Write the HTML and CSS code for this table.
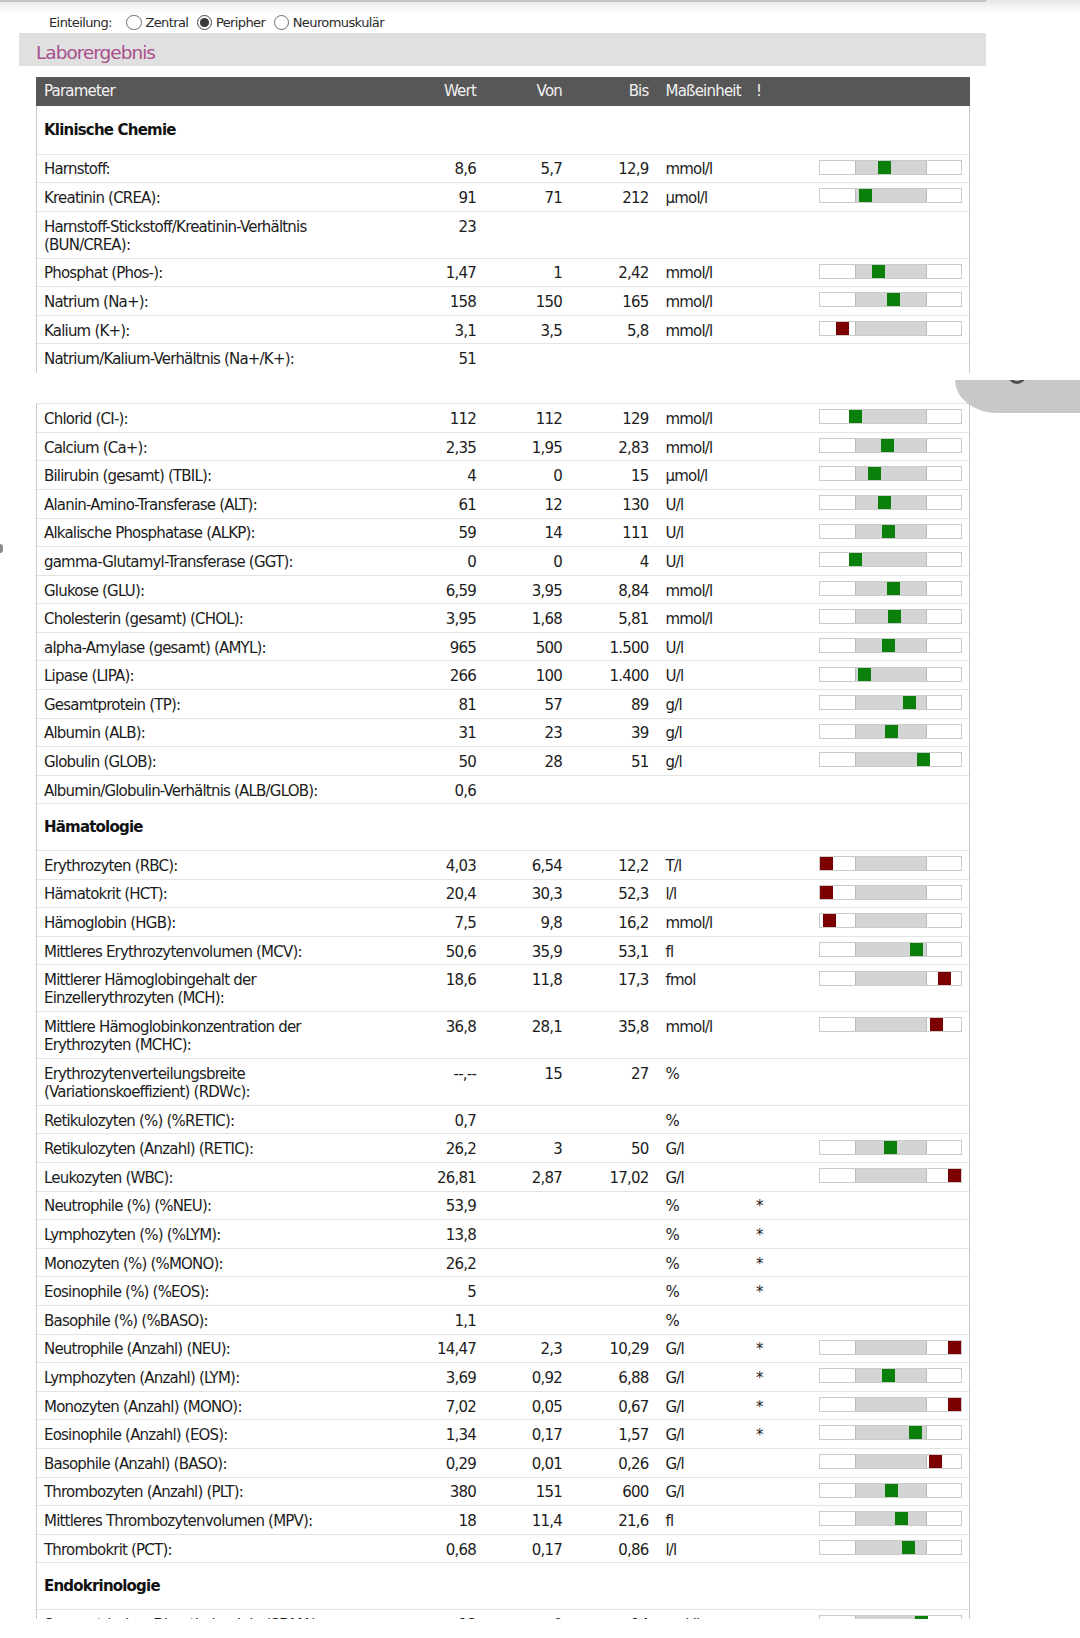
FILE: index.html
```html
<!DOCTYPE html>
<html lang="de">
<head>
<meta charset="utf-8">
<title>Laborergebnis</title>
<link rel="stylesheet" href="styles.css">
</head>
<body>
<div class="topline"></div>
<div class="filter">
  <span class="filter-label">Einteilung:</span>
  <label class="opt"><span class="radio"></span>Zentral</label>
  <label class="opt"><span class="radio on"></span>Peripher</label>
  <label class="opt"><span class="radio"></span>Neuromuskulär</label>
</div>
<div class="panel-title">Laborergebnis</div>

<div class="lab">
  <div class="head cols">
    <span class="p">Parameter</span><span class="n">Wert</span><span class="n">Von</span><span class="n">Bis</span><span class="u">Maßeinheit</span><span class="f">!</span><span></span><span></span>
  </div>

  <div class="tbody part1">
    <div class="sec sec-first">Klinische Chemie</div>
    <div class="row cols"><span class="p">Harnstoff:</span><span class="n">8,6</span><span class="n">5,7</span><span class="n">12,9</span><span class="u">mmol/l</span><span class="f"></span><span class="bar"><i class="mk" style="left:57.5px"></i></span></div>
    <div class="row cols"><span class="p">Kreatinin (CREA):</span><span class="n">91</span><span class="n">71</span><span class="n">212</span><span class="u">µmol/l</span><span class="f"></span><span class="bar"><i class="mk" style="left:38.7px"></i></span></div>
    <div class="row cols"><span class="p">Harnstoff-Stickstoff/Kreatinin-Verhältnis<br>(BUN/CREA):</span><span class="n">23</span><span class="n"></span><span class="n"></span><span class="u"></span><span class="f"></span></div>
    <div class="row cols"><span class="p">Phosphat (Phos-):</span><span class="n">1,47</span><span class="n">1</span><span class="n">2,42</span><span class="u">mmol/l</span><span class="f"></span><span class="bar"><i class="mk" style="left:52.3px"></i></span></div>
    <div class="row cols"><span class="p">Natrium (Na+):</span><span class="n">158</span><span class="n">150</span><span class="n">165</span><span class="u">mmol/l</span><span class="f"></span><span class="bar"><i class="mk" style="left:66.9px"></i></span></div>
    <div class="row cols"><span class="p">Kalium (K+):</span><span class="n">3,1</span><span class="n">3,5</span><span class="n">5,8</span><span class="u">mmol/l</span><span class="f"></span><span class="bar"><i class="mk bad" style="left:16px"></i></span></div>
    <div class="row cols last"><span class="p">Natrium/Kalium-Verhältnis (Na+/K+):</span><span class="n">51</span><span class="n"></span><span class="n"></span><span class="u"></span><span class="f"></span></div>
  </div>

  <div class="tbody part2">
    <div class="row cols"><span class="p">Chlorid (CI-):</span><span class="n">112</span><span class="n">112</span><span class="n">129</span><span class="u">mmol/l</span><span class="f"></span><span class="bar"><i class="mk" style="left:28.5px"></i></span></div>
    <div class="row cols"><span class="p">Calcium (Ca+):</span><span class="n">2,35</span><span class="n">1,95</span><span class="n">2,83</span><span class="u">mmol/l</span><span class="f"></span><span class="bar"><i class="mk" style="left:61.2px"></i></span></div>
    <div class="row cols"><span class="p">Bilirubin (gesamt) (TBIL):</span><span class="n">4</span><span class="n">0</span><span class="n">15</span><span class="u">µmol/l</span><span class="f"></span><span class="bar"><i class="mk" style="left:47.7px"></i></span></div>
    <div class="row cols"><span class="p">Alanin-Amino-Transferase (ALT):</span><span class="n">61</span><span class="n">12</span><span class="n">130</span><span class="u">U/l</span><span class="f"></span><span class="bar"><i class="mk" style="left:58.4px"></i></span></div>
    <div class="row cols"><span class="p">Alkalische Phosphatase (ALKP):</span><span class="n">59</span><span class="n">14</span><span class="n">111</span><span class="u">U/l</span><span class="f"></span><span class="bar"><i class="mk" style="left:61.9px"></i></span></div>
    <div class="row cols"><span class="p">gamma-Glutamyl-Transferase (GGT):</span><span class="n">0</span><span class="n">0</span><span class="n">4</span><span class="u">U/l</span><span class="f"></span><span class="bar"><i class="mk" style="left:28.5px"></i></span></div>
    <div class="row cols"><span class="p">Glukose (GLU):</span><span class="n">6,59</span><span class="n">3,95</span><span class="n">8,84</span><span class="u">mmol/l</span><span class="f"></span><span class="bar"><i class="mk" style="left:67.4px"></i></span></div>
    <div class="row cols"><span class="p">Cholesterin (gesamt) (CHOL):</span><span class="n">3,95</span><span class="n">1,68</span><span class="n">5,81</span><span class="u">mmol/l</span><span class="f"></span><span class="bar"><i class="mk" style="left:68.1px"></i></span></div>
    <div class="row cols"><span class="p">alpha-Amylase (gesamt) (AMYL):</span><span class="n">965</span><span class="n">500</span><span class="n">1.500</span><span class="u">U/l</span><span class="f"></span><span class="bar"><i class="mk" style="left:62px"></i></span></div>
    <div class="row cols"><span class="p">Lipase (LIPA):</span><span class="n">266</span><span class="n">100</span><span class="n">1.400</span><span class="u">U/l</span><span class="f"></span><span class="bar"><i class="mk" style="left:37.7px"></i></span></div>
    <div class="row cols"><span class="p">Gesamtprotein (TP):</span><span class="n">81</span><span class="n">57</span><span class="n">89</span><span class="u">g/l</span><span class="f"></span><span class="bar"><i class="mk" style="left:82.5px"></i></span></div>
    <div class="row cols"><span class="p">Albumin (ALB):</span><span class="n">31</span><span class="n">23</span><span class="n">39</span><span class="u">g/l</span><span class="f"></span><span class="bar"><i class="mk" style="left:64.5px"></i></span></div>
    <div class="row cols"><span class="p">Globulin (GLOB):</span><span class="n">50</span><span class="n">28</span><span class="n">51</span><span class="u">g/l</span><span class="f"></span><span class="bar"><i class="mk" style="left:97.4px"></i></span></div>
    <div class="row cols"><span class="p">Albumin/Globulin-Verhältnis (ALB/GLOB):</span><span class="n">0,6</span><span class="n"></span><span class="n"></span><span class="u"></span><span class="f"></span></div>

    <div class="sec">Hämatologie</div>
    <div class="row cols"><span class="p">Erythrozyten (RBC):</span><span class="n">4,03</span><span class="n">6,54</span><span class="n">12,2</span><span class="u">T/l</span><span class="f"></span><span class="bar"><i class="mk bad" style="left:0px"></i></span></div>
    <div class="row cols"><span class="p">Hämatokrit (HCT):</span><span class="n">20,4</span><span class="n">30,3</span><span class="n">52,3</span><span class="u">l/l</span><span class="f"></span><span class="bar"><i class="mk bad" style="left:0px"></i></span></div>
    <div class="row cols"><span class="p">Hämoglobin (HGB):</span><span class="n">7,5</span><span class="n">9,8</span><span class="n">16,2</span><span class="u">mmol/l</span><span class="f"></span><span class="bar"><i class="mk bad" style="left:2.6px"></i></span></div>
    <div class="row cols"><span class="p">Mittleres Erythrozytenvolumen (MCV):</span><span class="n">50,6</span><span class="n">35,9</span><span class="n">53,1</span><span class="u">fl</span><span class="f"></span><span class="bar"><i class="mk" style="left:90px"></i></span></div>
    <div class="row cols"><span class="p">Mittlerer Hämoglobingehalt der<br>Einzellerythrozyten (MCH):</span><span class="n">18,6</span><span class="n">11,8</span><span class="n">17,3</span><span class="u">fmol</span><span class="f"></span><span class="bar"><i class="mk bad" style="left:117.5px"></i></span></div>
    <div class="row cols"><span class="p">Mittlere Hämoglobinkonzentration der<br>Erythrozyten (MCHC):</span><span class="n">36,8</span><span class="n">28,1</span><span class="n">35,8</span><span class="u">mmol/l</span><span class="f"></span><span class="bar"><i class="mk bad" style="left:109.8px"></i></span></div>
    <div class="row cols"><span class="p">Erythrozytenverteilungsbreite<br>(Variationskoeffizient) (RDWc):</span><span class="n">--,--</span><span class="n">15</span><span class="n">27</span><span class="u">%</span><span class="f"></span></div>
    <div class="row cols"><span class="p">Retikulozyten (%) (%RETIC):</span><span class="n">0,7</span><span class="n"></span><span class="n"></span><span class="u">%</span><span class="f"></span></div>
    <div class="row cols"><span class="p">Retikulozyten (Anzahl) (RETIC):</span><span class="n">26,2</span><span class="n">3</span><span class="n">50</span><span class="u">G/l</span><span class="f"></span><span class="bar"><i class="mk" style="left:64px"></i></span></div>
    <div class="row cols"><span class="p">Leukozyten (WBC):</span><span class="n">26,81</span><span class="n">2,87</span><span class="n">17,02</span><span class="u">G/l</span><span class="f"></span><span class="bar"><i class="mk bad" style="left:128px"></i></span></div>
    <div class="row cols"><span class="p">Neutrophile (%) (%NEU):</span><span class="n">53,9</span><span class="n"></span><span class="n"></span><span class="u">%</span><span class="f">*</span></div>
    <div class="row cols"><span class="p">Lymphozyten (%) (%LYM):</span><span class="n">13,8</span><span class="n"></span><span class="n"></span><span class="u">%</span><span class="f">*</span></div>
    <div class="row cols"><span class="p">Monozyten (%) (%MONO):</span><span class="n">26,2</span><span class="n"></span><span class="n"></span><span class="u">%</span><span class="f">*</span></div>
    <div class="row cols"><span class="p">Eosinophile (%) (%EOS):</span><span class="n">5</span><span class="n"></span><span class="n"></span><span class="u">%</span><span class="f">*</span></div>
    <div class="row cols"><span class="p">Basophile (%) (%BASO):</span><span class="n">1,1</span><span class="n"></span><span class="n"></span><span class="u">%</span><span class="f"></span></div>
    <div class="row cols"><span class="p">Neutrophile (Anzahl) (NEU):</span><span class="n">14,47</span><span class="n">2,3</span><span class="n">10,29</span><span class="u">G/l</span><span class="f">*</span><span class="bar"><i class="mk bad" style="left:128px"></i></span></div>
    <div class="row cols"><span class="p">Lymphozyten (Anzahl) (LYM):</span><span class="n">3,69</span><span class="n">0,92</span><span class="n">6,88</span><span class="u">G/l</span><span class="f">*</span><span class="bar"><i class="mk" style="left:62px"></i></span></div>
    <div class="row cols"><span class="p">Monozyten (Anzahl) (MONO):</span><span class="n">7,02</span><span class="n">0,05</span><span class="n">0,67</span><span class="u">G/l</span><span class="f">*</span><span class="bar"><i class="mk bad" style="left:128px"></i></span></div>
    <div class="row cols"><span class="p">Eosinophile (Anzahl) (EOS):</span><span class="n">1,34</span><span class="n">0,17</span><span class="n">1,57</span><span class="u">G/l</span><span class="f">*</span><span class="bar"><i class="mk" style="left:88.7px"></i></span></div>
    <div class="row cols"><span class="p">Basophile (Anzahl) (BASO):</span><span class="n">0,29</span><span class="n">0,01</span><span class="n">0,26</span><span class="u">G/l</span><span class="f"></span><span class="bar"><i class="mk bad" style="left:109.1px"></i></span></div>
    <div class="row cols"><span class="p">Thrombozyten (Anzahl) (PLT):</span><span class="n">380</span><span class="n">151</span><span class="n">600</span><span class="u">G/l</span><span class="f"></span><span class="bar"><i class="mk" style="left:65.2px"></i></span></div>
    <div class="row cols"><span class="p">Mittleres Thrombozytenvolumen (MPV):</span><span class="n">18</span><span class="n">11,4</span><span class="n">21,6</span><span class="u">fl</span><span class="f"></span><span class="bar"><i class="mk" style="left:75.1px"></i></span></div>
    <div class="row cols"><span class="p">Thrombokrit (PCT):</span><span class="n">0,68</span><span class="n">0,17</span><span class="n">0,86</span><span class="u">l/l</span><span class="f"></span><span class="bar"><i class="mk" style="left:81.7px"></i></span></div>

    <div class="sec">Endokrinologie</div>
    <div class="row cols"><span class="p">Symmetrisches Dimethylarginin (SDMA):</span><span class="n">13</span><span class="n">0</span><span class="n">14</span><span class="u">µg/dl</span><span class="f"></span><span class="bar"><i class="mk" style="left:95.4px"></i></span></div>
  </div>
</div>

<div class="fab"></div>
<div class="edge"></div>
</body>
</html>
```

FILE: styles.css
```css
html, body {
  margin: 0;
  padding: 0;
}

body {
  position: relative;
  width: 1080px;
  height: 1638px;
  overflow: hidden;
  background: #fff linear-gradient(to bottom, #e6e6e6 0, #f4f4f4 6px, #ffffff 16px) no-repeat;
  background-size: 100% 16px;
  font-family: "DejaVu Sans", Verdana, sans-serif;
  color: #1c1c1c;
}

.topline {
  width: 986px;
  height: 2px;
  background: #c4c4c4;
}

/* filter line */
.filter {
  display: flex;
  align-items: center;
  height: 18px;
  margin: 11.5px 0 1.5px;
  padding-left: 49px;
  font-size: 13px;
  letter-spacing: -0.6px;
  color: #2a2a2a;
}

.filter-label {
  margin-right: 14.5px;
}

.opt {
  display: flex;
  align-items: center;
  margin-right: 8.5px;
}

.radio {
  display: flex;
  align-items: center;
  justify-content: center;
  width: 15.5px;
  height: 15.5px;
  box-sizing: border-box;
  margin-right: 3.5px;
  border: 1px solid #6a6a6a;
  border-radius: 50%;
  background: #fff;
}

.radio.on {
  border-color: #454545;
}

.radio.on::after {
  content: "";
  width: 8.5px;
  height: 8.5px;
  border-radius: 50%;
  background: #3a3a3a;
}

/* panel title */
.panel-title {
  width: 967px;
  height: 33.4px;
  box-sizing: border-box;
  margin-left: 19px;
  padding: 7px 0 0 17px;
  background: #e0e0e0;
  font-size: 18.5px;
  line-height: 26.4px;
  letter-spacing: -1px;
  color: #a84f8d;
}

/* lab table */
.lab {
  width: 934px;
  margin: 10.3px 0 0 36px;
}

.cols {
  display: grid;
  grid-template-columns: 380px 59px 86px 86.5px 107.5px 63px 143px 7px;
}

.head {
  height: 29px;
  padding: 0 1px;
  align-items: center;
  background: #575757;
  color: #f2f2f2;
  font-size: 15px;
  letter-spacing: -0.8px;
}

.p {
  padding-left: 7px;
}

.n {
  text-align: right;
}

.u {
  padding-left: 17px;
}

.tbody {
  border-left: 1px solid #c9c9c9;
  border-right: 1px solid #c9c9c9;
}

.part2 {
  height: 1216px;
  box-sizing: border-box;
  margin-top: 30.1px;
  border-top: 1px solid #e3e3e3;
  overflow: hidden;
}

.sec {
  display: flex;
  align-items: center;
  height: 46.6px;
  box-sizing: border-box;
  padding-left: 7px;
  border-bottom: 1px solid #e3e3e3;
  font-size: 15px;
  font-weight: bold;
  letter-spacing: -0.8px;
  color: #111;
}

.sec-first {
  height: 49px;
  border-bottom-color: #e8e8e8;
}

.row {
  padding: 5.8px 0 3.6px;
  border-bottom: 1px solid #e3e3e3;
  font-size: 15px;
  line-height: 18.2px;
  letter-spacing: -0.8px;
}

.row.last {
  border-bottom-color: transparent;
}

/* range bar */
.bar {
  position: relative;
  align-self: start;
  height: 15px;
  box-sizing: border-box;
  margin-top: -0.7px;
  border: 1px solid #cbcbcb;
  background: #fff;
}

.bar::before {
  content: "";
  position: absolute;
  top: 0;
  bottom: 0;
  left: 35px;
  width: 72px;
  box-sizing: border-box;
  border-left: 1px solid #b8b8b8;
  border-right: 1px solid #b8b8b8;
  background: #d4d4d4;
}

.mk {
  position: absolute;
  top: 0;
  width: 13px;
  height: 13px;
  background: #0a7f0a;
}

.mk.bad {
  background: #7c0000;
}

/* floating button fragment at the right edge */
.fab {
  position: absolute;
  left: 955px;
  top: 380px;
  width: 125px;
  height: 33px;
  overflow: hidden;
  background: #c8c8c8;
  border-bottom-left-radius: 42px 33px;
}

.fab::before {
  content: "";
  position: absolute;
  left: 53px;
  top: -14px;
  width: 18px;
  height: 18px;
  box-sizing: border-box;
  border: 3px solid #4f4f4f;
  border-radius: 50%;
}

.edge {
  position: absolute;
  left: 0;
  top: 544px;
  width: 3px;
  height: 9px;
  border-radius: 0 3px 3px 0;
  background: #8a8a8a;
}
```
